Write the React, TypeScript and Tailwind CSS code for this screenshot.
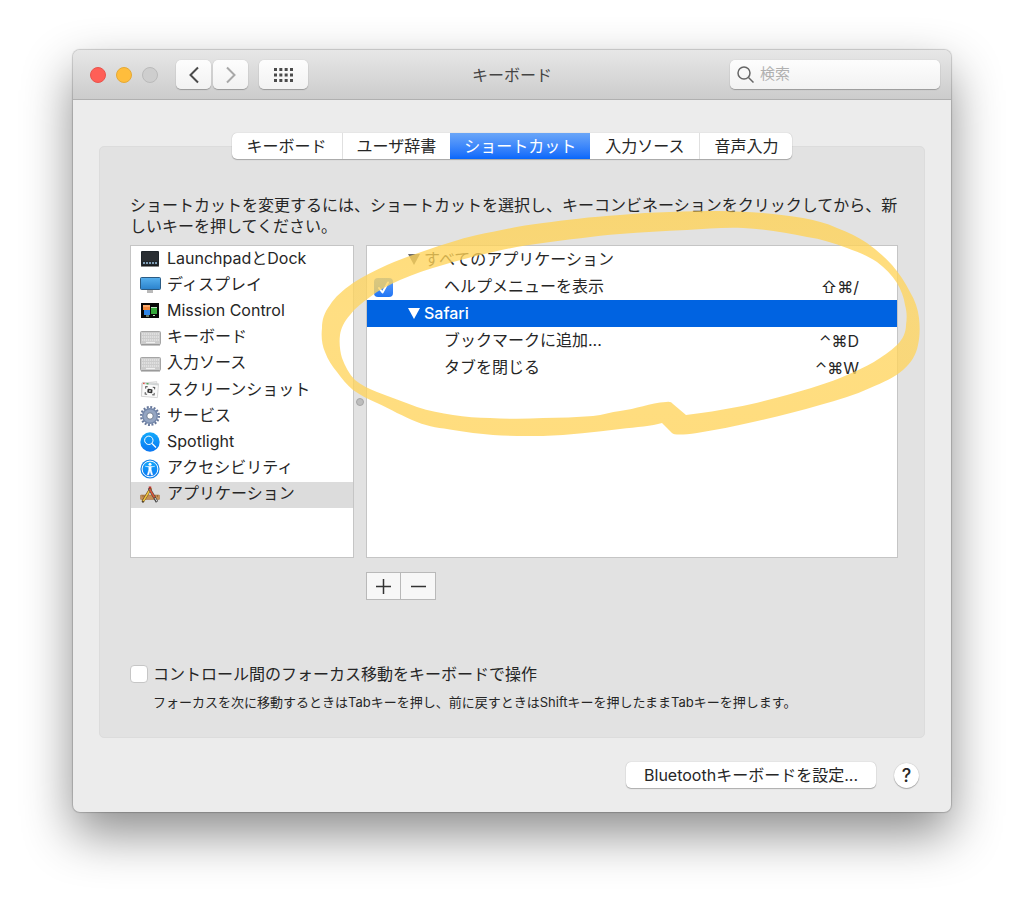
import type { ReactNode } from "react";

const icons: Record<string, ReactNode> = {
  dock: (
    <>
      <rect x="1" y="2" width="18" height="15" rx="1" fill="#20262b" />
      <rect x="2" y="3" width="16" height="9" fill="#2b2f33" />
      <path d="M3 14h14" stroke="#7f9db5" strokeWidth="2" strokeDasharray="2 1" />
      <path d="M1 17h18" stroke="#111" />
    </>
  ),
  display: (
    <>
      <path d="M7 15h6v3H7z" fill="#b9b9b9" />
      <rect x="0.5" y="2.5" width="20" height="12" rx="1" fill="url(#screen)" stroke="#2b5b83" />
    </>
  ),
  mission: (
    <>
      <rect x="1" y="2" width="18" height="15" fill="#080808" />
      <rect x="3" y="4" width="7" height="5" fill="#f2873a" />
      <path d="M3 5h7" stroke="#ffc99b" />
      <rect x="4" y="9" width="6" height="5" fill="#2f86e8" />
      <rect x="11" y="6" width="6" height="7" fill="#35a83a" />
      <path d="M11 6.500h6M6 15h3M13 14.500h2" stroke="#bfe3c0" />
    </>
  ),
  keyboard: (
    <>
      <rect x="0.5" y="3.5" width="20" height="13" rx="1" fill="#cccccc" stroke="#a5a5a5" />
      <path d="M2 6h17M2 9h17M2 12h17" stroke="#f2f2f2" strokeWidth="1.200" strokeDasharray="1.300 .7" />
      <path d="M6 14.500h9" stroke="#f0f0f0" strokeWidth="1.200" />
      <path d="M1 17h19" stroke="#8e8e8e" />
    </>
  ),
  screenshot: (
    <g transform="rotate(5 10 10)">
      <path d="M1 4 16 1l1 13L2 17z" fill="#eee" stroke="#ccc" strokeWidth=".6" />
      <rect x="2" y="3" width="16" height="14" fill="#fafafa" stroke="#c9c9c9" strokeWidth=".7" />
      <path d="M2 4h16" stroke="#cfd3d4" strokeWidth="1.500" />
      <path d="M2.500 4h1.500" stroke="#e64b3c" strokeWidth="1.300" />
      <path d="M6 4h2" stroke="#43a64a" strokeWidth="1.300" />
      <path d="M5.500 9V7h2M12.500 7h2v2M14.500 12.500v2h-2M7.500 14.500h-2v-2" fill="none" stroke="#555" />
      <rect x="7.500" y="9" width="5" height="4" rx=".8" fill="#333" />
      <circle cx="10" cy="11" r="1" fill="#bbb" />
    </g>
  ),
  gear: (
    <>
      <circle cx="10" cy="10" r="8.800" fill="none" stroke="#66779a" strokeWidth="2.400" strokeDasharray="1.900 1.556" />
      <circle cx="10" cy="10" r="8" fill="#7488ab" />
      <circle cx="10" cy="10" r="6.600" fill="#94a5c2" />
      <circle cx="10" cy="10" r="3.200" fill="#fff" stroke="#5a6980" strokeWidth=".8" />
    </>
  ),
  spotlight: (
    <>
      <circle cx="10" cy="10" r="9.700" fill="url(#azure)" />
      <circle cx="8.800" cy="8.300" r="4.200" fill="none" stroke="#fff" strokeWidth="1" />
      <path d="m12 11.500 4 4" stroke="#fff" strokeWidth="1.200" />
    </>
  ),
  access: (
    <>
      <circle cx="10" cy="10" r="9.600" fill="#1283ea" />
      <circle cx="10" cy="10" r="7.900" fill="url(#azure)" stroke="#fff" strokeWidth="1" />
      <circle cx="10" cy="5.300" r="1.500" fill="#fff" />
      <path d="m5 7.200 3.800.8v2.700L7.300 16h1.400L10 11.800 11.300 16h1.400l-1.500-5.300V8l3.800-.8" fill="#fff" stroke="#fff" strokeWidth=".5" />
    </>
  ),
  apps: (
    <>
      <rect x="0.5" y="10" width="19" height="4.500" rx=".5" fill="#c69057" stroke="#a06f3d" strokeWidth=".5" />
      <path d="M3 10v2M6 10v2M15 10v2M17.500 10v2" stroke="#7d532b" strokeWidth=".6" />
      <path d="M11 3 2.500 17" stroke="#6b4a1f" strokeWidth="2.600" />
      <path d="M11 3 3 16.500" stroke="#f0c541" strokeWidth="1.500" />
      <path d="m9 3 8 14" stroke="#444" strokeWidth="2.600" />
      <path d="m9.500 4 5 8.500" stroke="#e0583a" strokeWidth="1.500" />
      <path d="m15 13 2 3.500" stroke="#ddd" />
      <path d="M10 1.500v2" stroke="#b8322b" strokeWidth="2.500" />
      <path d="m2.800 15.800-.8 2.200 2-1.400" fill="#222" />
    </>
  ),
};

const categories = [
  { icon: "dock", label: "LaunchpadとDock" },
  { icon: "display", label: "ディスプレイ" },
  { icon: "mission", label: "Mission Control" },
  { icon: "keyboard", label: "キーボード" },
  { icon: "keyboard", label: "入力ソース" },
  { icon: "screenshot", label: "スクリーンショット" },
  { icon: "gear", label: "サービス" },
  { icon: "spotlight", label: "Spotlight" },
  { icon: "access", label: "アクセシビリティ" },
  { icon: "apps", label: "アプリケーション" },
];

const shortcuts = [
  { label: "すべてのアプリケーション", group: true },
  { label: "ヘルプメニューを表示", keys: "⇧⌘/", enabled: true },
  { label: "Safari", group: true, selected: true },
  { label: "ブックマークに追加...", keys: "⌃⌘D" },
  { label: "タブを閉じる", keys: "⌃⌘W" },
];

const tabs = ["キーボード", "ユーザ辞書", "ショートカット", "入力ソース", "音声入力"];

const toolButton =
  "flex h-[29px] items-center justify-center rounded-[5px] bg-linear-to-b from-[#fdfdfd] to-[#f2f2f2] shadow-[0_1px_1px_rgba(0,0,0,0.25),0_0_1px_rgba(0,0,0,0.2)]";

function TitleBar() {
  return (
    <header className="grid h-[50px] grid-cols-[1fr_auto_1fr] items-center rounded-t-[7px] border-b border-[#b0b0b0] bg-linear-to-b from-[#e7e7e7] to-[#cccccc] px-[11px]">
      <div className="flex items-center pl-[6px]">
        <div className="flex gap-[10px]">
          <button aria-label="閉じる" className="h-4 w-4 rounded-full border border-[#e9544c] bg-[#ff5f57]" />
          <button aria-label="しまう" className="h-4 w-4 rounded-full border border-[#e5a935] bg-[#ffbd3c]" />
          <button aria-label="拡大" disabled className="h-4 w-4 rounded-full border border-[#bababa] bg-[#cecece]" />
        </div>
        <div className="ml-[18px] flex gap-[2px]">
          <button aria-label="戻る" className={`w-[35px] ${toolButton}`}>
            <svg width="12" height="18" viewBox="0 0 12 18" fill="none" stroke="#4a4a4a" strokeWidth="2">
              <path d="M10 1.500 2.500 9l7.500 7.500" />
            </svg>
          </button>
          <button aria-label="進む" className={`w-[35px] ${toolButton}`}>
            <svg width="12" height="18" viewBox="0 0 12 18" fill="none" stroke="#a8a8a8" strokeWidth="2">
              <path d="M2 1.500 9.500 9 2 16.500" />
            </svg>
          </button>
        </div>
        <button aria-label="すべてを表示" className={`ml-[11px] w-[49px] ${toolButton}`}>
          <svg width="19" height="14" viewBox="0 0 19 14" stroke="#4a4a4a" strokeWidth="3">
            <path d="M0 1.500h19M0 7h19M0 12.500h19" strokeDasharray="3 2.330" />
          </svg>
        </button>
      </div>
      <h1 className="text-base text-[#444]">キーボード</h1>
      <label className={`w-[210px] justify-self-end gap-[6px] px-[7px] ${toolButton}`}>
        <svg width="17" height="17" viewBox="0 0 17 17" fill="none" stroke="#666" strokeWidth="1.500" className="shrink-0">
          <circle cx="7" cy="7" r="6" />
          <path d="m11.500 11.500 5 5" />
        </svg>
        <input
          type="text"
          aria-label="検索"
          placeholder="検索"
          className="w-full min-w-0 bg-transparent text-[15px] outline-none placeholder:text-[#b0b0b0]"
        />
      </label>
    </header>
  );
}

function CategoryList() {
  return (
    <ul className="grid h-[262px] auto-rows-fr">
      {categories.map((c, i) => (
        <li key={c.label}>
          <button
            className={`flex h-full w-full items-center gap-[6px] pb-[3px] pl-[9px] text-left ${i === 9 ? "bg-[#dcdcdc]" : ""}`}
          >
            <svg width="21" height="20" viewBox="0 0 21 20" className="mt-[3px] shrink-0">
              {icons[c.icon]}
            </svg>
            <span className="whitespace-nowrap">{c.label}</span>
          </button>
        </li>
      ))}
    </ul>
  );
}

function ShortcutTable() {
  return (
    <table className="w-full border-collapse">
      <tbody>
        {shortcuts.map((s) => (
          <tr key={s.label} className={`h-[27px] ${s.selected ? "bg-[#0063e1] font-medium text-white" : ""}`}>
            <td className="w-[41px] pt-[1px] pl-[7px]">
              {s.enabled && (
                <span className="relative block h-[19px] w-[19px]">
                  <input
                    type="checkbox"
                    defaultChecked
                    aria-label={s.label}
                    className="block h-full w-full appearance-none rounded-[4px] bg-linear-to-b from-[#5c9df8] to-[#1f75f5]"
                  />
                  <svg viewBox="0 0 19 19" className="pointer-events-none absolute inset-0" fill="none" stroke="#fff" strokeWidth="2">
                    <path d="m5 10 3.500 4.500L14 4.500" strokeLinecap="round" strokeLinejoin="round" />
                  </svg>
                </span>
              )}
            </td>
            <td className={s.group ? "" : "pl-[36px]"}>
              <span className="flex items-center gap-1 leading-[27px] whitespace-nowrap">
                {s.group && (
                  <svg width="12" height="11" viewBox="0 0 12 11" className={`shrink-0 ${s.selected ? "fill-white" : "fill-[#6d6d6d]"}`}>
                    <path d="M0 0h12L6 11z" />
                  </svg>
                )}
                {s.label}
              </span>
            </td>
            <td className="pr-[38px] text-right">{s.keys}</td>
          </tr>
        ))}
      </tbody>
    </table>
  );
}

// hand-drawn marker loop around the app shortcuts
function MarkerLoop() {
  return (
    <svg
      width="604"
      height="232"
      viewBox="319 207 604 232"
      className="pointer-events-none absolute -top-[38px] left-[189px]"
    >
      <defs>
        <linearGradient id="marker" x1="0" y1="0" x2="0" y2="1">
          <stop offset="0" stopColor="#ffd254" />
          <stop offset=".45" stopColor="#ffd55f" />
          <stop offset="1" stopColor="#ffd35a" />
        </linearGradient>
      </defs>
      <path
        fill="url(#marker)"
        fillOpacity=".78"
        fillRule="evenodd"
        d="M620 215C590 217 565 220 543 223C518 226 497 231 477 235C459 239 442 245 427 250C413 255 400 259 387 265C374 271 362 277 353 283C343 290 335 297 330 305C324 313 322 320 322 328C321 337 322 345 325 352C328 360 332 366 337 372C342 379 347 385 353 390C360 395 368 399 377 403C390 409 404 417 417 422C429 427 441 428 453 430C466 432 480 434 493 435C510 436 527 436 543 436C570 435 595 432 620 429C637 427 652 426 662 423L672 433Q675 436 697 433C716 430 735 426 753 422C776 417 799 411 820 405C838 400 855 395 870 388C884 382 895 377 903 370C911 363 916 355 918 345C920 336 920 327 919 318C918 309 915 300 910 292C905 282 899 273 892 265C884 256 875 249 867 243C858 237 848 232 837 228C826 223 815 220 803 218C790 216 777 214 763 213C749 212 734 211 720 211C687 211 652 212 620 215Z
        M620 234C594 236 567 240 543 243C526 245 510 248 493 252C476 256 459 260 443 265C428 269 414 274 400 280C389 285 379 290 370 297C362 303 355 308 350 315C344 322 341 328 340 335C339 343 340 351 342 358C345 366 349 374 355 380C361 385 369 389 377 392C390 397 404 402 417 407C429 411 441 413 453 415C465 417 478 418 490 418C508 419 526 419 543 418C560 418 577 417 593 416C603 415 611 412 620 411C636 409 650 403 666 402Q671 401 673 404L686 415C704 413 720 410 737 407C754 404 771 399 787 395C808 389 829 383 847 375C866 367 883 358 897 345C903 339 906 332 906 325C907 318 907 312 905 305C904 297 901 290 897 283C892 275 885 268 877 262C868 256 858 252 847 248C834 243 821 239 807 237C786 233 765 229 743 228C725 227 706 229 687 230C664 231 642 232 620 234Z"
      />
    </svg>
  );
}

export default function App() {
  return (
    <main className="min-h-screen bg-white px-[73px] pt-[50px] pb-[96px] font-['Inter','Noto_Sans_CJK_JP',sans-serif] text-base text-[#262626]">
      <svg width="0" height="0" className="absolute">
        <defs>
          <linearGradient id="screen" x2="0" y2="1">
            <stop stopColor="#56b0ee" />
            <stop offset="1" stopColor="#2b82cc" />
          </linearGradient>
          <linearGradient id="azure" x2="0" y2="1">
            <stop stopColor="#12a9fb" />
            <stop offset="1" stopColor="#0a76f2" />
          </linearGradient>
        </defs>
      </svg>
      <div className="rounded-[7px] bg-[#ececec] pb-[24px] shadow-[0_0_1px_1px_rgba(0,0,0,0.18),0_22px_50px_rgba(0,0,0,0.45)]">
        <TitleBar />

        <section className="mx-[26px] mt-[46px] rounded-[5px] border border-[#dcdcdc] bg-[#e2e2e2] pb-[25px]">
          <nav className="-mt-[14px] flex justify-center">
            <div className="flex h-[26px] overflow-hidden rounded-[5px] bg-white shadow-[0_1px_1px_rgba(0,0,0,0.25),0_0_1px_rgba(0,0,0,0.25)]">
              {tabs.map((tab, i) => (
                <button
                  key={tab}
                  className={
                    i === 2
                      ? "bg-linear-to-b from-[#6aa6f8] to-[#0567fb] px-[14px] text-white"
                      : i === 0 || i === 3
                        ? "border-r border-[#e0e0e0] px-[15px]"
                        : "px-[14px]"
                  }
                >
                  {tab}
                </button>
              ))}
            </div>
          </nav>

          <p className="mt-9 pr-4 pl-[30px] leading-[21px]">
            ショートカットを変更するには、ショートカットを選択し、キーコンビネーションをクリックしてから、新しいキーを押してください。
          </p>

          <div className="relative mt-2 mr-[26px] ml-[30px] grid grid-cols-[224px_12px_1fr]">
            <div className="h-[313px] border border-[#c5c5c5] bg-white">
              <CategoryList />
            </div>
            <div className="flex items-center justify-center">
              <span className="h-2 w-2 rounded-full border border-[#a5a5a5] bg-[#bdbdbd]" />
            </div>
            <div className="border border-[#c5c5c5] bg-white">
              <ShortcutTable />
            </div>
            <div className="col-start-3 mt-[14px] flex">
              <button aria-label="追加" className="flex h-[28px] w-[35px] items-center justify-center border border-[#b9b9b9] bg-[#f7f7f7]">
                <svg width="15" height="15" viewBox="0 0 15 15" stroke="#333" strokeWidth="1.500">
                  <path d="M7.500 0v15M0 7.500h15" />
                </svg>
              </button>
              <button aria-label="削除" className="flex h-[28px] w-[35px] items-center justify-center border border-l-0 border-[#b9b9b9] bg-[#f7f7f7]">
                <svg width="15" height="15" viewBox="0 0 15 15" stroke="#333" strokeWidth="1.500">
                  <path d="M0 7.500h15" />
                </svg>
              </button>
            </div>
            <MarkerLoop />
          </div>

          <div className="mt-[62px] ml-[30px]">
            <label className="flex items-center gap-[5px]">
              <input
                type="checkbox"
                className="h-[18px] w-[18px] appearance-none rounded-[4px] border border-[#c6c6c6] bg-white"
              />
              コントロール間のフォーカス移動をキーボードで操作
            </label>
            <p className="mt-[6px] ml-[23px] text-[13px] leading-[20px]">
              フォーカスを次に移動するときはTabキーを押し、前に戻すときはShiftキーを押したままTabキーを押します。
            </p>
          </div>
        </section>

        <footer className="mt-[24px] mr-[32px] flex items-center justify-end gap-[18px]">
          <button className="h-[26px] rounded-[5px] bg-white px-[18px] shadow-[0_1px_1px_rgba(0,0,0,0.25),0_0_1px_rgba(0,0,0,0.3)]">
            Bluetoothキーボードを設定...
          </button>
          <button
            aria-label="ヘルプ"
            className="h-[25px] w-[25px] rounded-full bg-white text-lg leading-[25px] font-medium shadow-[0_1px_1px_rgba(0,0,0,0.25),0_0_1px_rgba(0,0,0,0.3)]"
          >
            ?
          </button>
        </footer>
      </div>
    </main>
  );
}
